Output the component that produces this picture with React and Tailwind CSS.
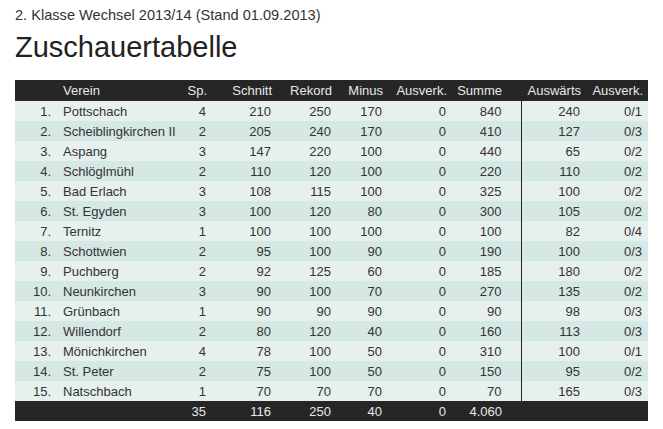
const rows = [
  ['1.', 'Pottschach', 4, 210, 250, 170, 0, 840, 240, '0/1'],
  ['2.', 'Scheiblingkirchen II', 2, 205, 240, 170, 0, 410, 127, '0/3'],
  ['3.', 'Aspang', 3, 147, 220, 100, 0, 440, 65, '0/2'],
  ['4.', 'Schlöglmühl', 2, 110, 120, 100, 0, 220, 110, '0/2'],
  ['5.', 'Bad Erlach', 3, 108, 115, 100, 0, 325, 100, '0/2'],
  ['6.', 'St. Egyden', 3, 100, 120, 80, 0, 300, 105, '0/2'],
  ['7.', 'Ternitz', 1, 100, 100, 100, 0, 100, 82, '0/4'],
  ['8.', 'Schottwien', 2, 95, 100, 90, 0, 190, 100, '0/3'],
  ['9.', 'Puchberg', 2, 92, 125, 60, 0, 185, 180, '0/2'],
  ['10.', 'Neunkirchen', 3, 90, 100, 70, 0, 270, 135, '0/2'],
  ['11.', 'Grünbach', 1, 90, 90, 90, 0, 90, 98, '0/3'],
  ['12.', 'Willendorf', 2, 80, 120, 40, 0, 160, 113, '0/3'],
  ['13.', 'Mönichkirchen', 4, 78, 100, 50, 0, 310, 100, '0/1'],
  ['14.', 'St. Peter', 2, 75, 100, 50, 0, 150, 95, '0/2'],
  ['15.', 'Natschbach', 1, 70, 70, 70, 0, 70, 165, '0/3'],
];

const widths = [42, 125, 30, 65, 60, 51, 64, 69, 65, 62];

export default function App() {
  return (
    <div className="bg-white min-h-screen pl-[15px] pt-[7px] font-['Liberation_Sans',Arial,sans-serif] text-[#333]">
      <p className="text-[14.6px] leading-[17px]">2. Klasse Wechsel 2013/14 (Stand 01.09.2013)</p>
      <h1 className="text-[29px] leading-[29px] mt-[8.5px] text-[#222]">Zuschauertabelle</h1>
      <table className="mt-[18.5px] table-fixed border-collapse w-[633px] text-[13px] leading-[16px]">
        <colgroup>
          {widths.map((w, i) => (
            <col key={i} style={{ width: w }} />
          ))}
        </colgroup>
        <thead>
          <tr className="bg-[#262626] text-[#e8e8e8] h-[21px]">
            <th></th>
            <th className="text-left font-normal pl-[6px]">Verein</th>
            <th className="text-right font-normal pr-[5px]">Sp.</th>
            <th className="text-right font-normal pr-[5px]">Schnitt</th>
            <th className="text-right font-normal pr-[5px]">Rekord</th>
            <th className="text-right font-normal pr-[5px]">Minus</th>
            <th className="text-right font-normal pr-[5px]">Ausverk.</th>
            <th className="text-right font-normal pr-[19px]">Summe</th>
            <th className="text-right font-normal pr-[5px]">Auswärts</th>
            <th className="text-right font-normal pr-[5px]">Ausverk.</th>
          </tr>
        </thead>
        <tbody>
          {rows.map((r, i) => (
            <tr key={i} className={`h-[20px] ${i % 2 === 0 ? 'bg-[#e6f0ed]' : 'bg-[#d5e8e3]'}`}>
              <td className="text-right pr-[6px] pt-[2px]">{r[0]}</td>
              <td className="text-left pl-[6px] pt-[2px] whitespace-nowrap">{r[1]}</td>
              <td className="text-right pr-[6px] pt-[2px]">{r[2]}</td>
              <td className="text-right pr-[6px] pt-[2px]">{r[3]}</td>
              <td className="text-right pr-[6px] pt-[2px]">{r[4]}</td>
              <td className="text-right pr-[6px] pt-[2px]">{r[5]}</td>
              <td className="text-right pr-[6px] pt-[2px]">{r[6]}</td>
              <td className="text-right pr-[19px] pt-[2px]">{r[7]}</td>
              <td className="text-right pr-[6px] pt-[2px] border-l border-[#222]">{r[8]}</td>
              <td className="text-right pr-[6px] pt-[2px]">{r[9]}</td>
            </tr>
          ))}
        </tbody>
        <tfoot>
          <tr className="bg-[#262626] text-[#e8e8e8] h-[20px]">
            <td></td>
            <td></td>
            <td className="text-right pr-[6px] pt-[2px]">35</td>
            <td className="text-right pr-[6px] pt-[2px]">116</td>
            <td className="text-right pr-[6px] pt-[2px]">250</td>
            <td className="text-right pr-[6px] pt-[2px]">40</td>
            <td className="text-right pr-[6px] pt-[2px]">0</td>
            <td className="text-right pr-[19px] pt-[2px]">4.060</td>
            <td></td>
            <td></td>
          </tr>
        </tfoot>
      </table>
    </div>
  );
}
